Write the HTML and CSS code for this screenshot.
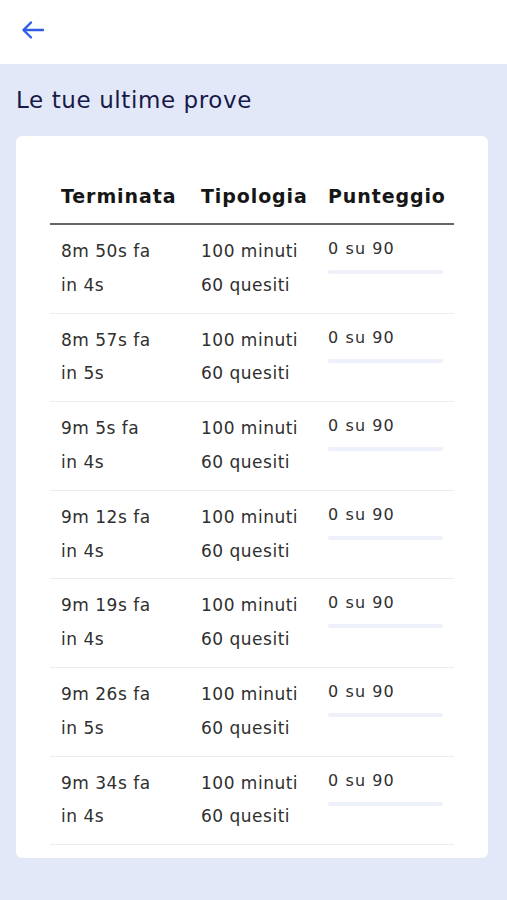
FILE: index.html
```html
<!DOCTYPE html>
<html lang="it">
<head>
<meta charset="utf-8">
<title>Le tue ultime prove</title>
<link rel="stylesheet" href="styles.css">
</head>
<body>
<header class="topbar">
  <button class="back" aria-label="Indietro">
    <svg width="24" height="20" viewBox="0 0 24 20" fill="none" stroke="#2f5be6" stroke-width="2.4" stroke-linecap="round" stroke-linejoin="round">
      <path d="M22 10H3"/>
      <path d="M10 2.5L2.5 10L10 17.5"/>
    </svg>
  </button>
</header>
<main class="content">
  <h1 class="title">Le tue ultime prove</h1>
  <section class="card">
    <table class="tests">
      <thead>
        <tr><th class="c1">Terminata</th><th class="c2">Tipologia</th><th class="c3">Punteggio</th></tr>
      </thead>
      <tbody>
        <tr><td><div>8m 50s fa</div><div>in 4s</div></td><td><div>100 minuti</div><div>60 quesiti</div></td><td class="score"><div class="pts">0 su 90</div><div class="bar"></div></td></tr>
        <tr><td><div>8m 57s fa</div><div>in 5s</div></td><td><div>100 minuti</div><div>60 quesiti</div></td><td class="score"><div class="pts">0 su 90</div><div class="bar"></div></td></tr>
        <tr><td><div>9m 5s fa</div><div>in 4s</div></td><td><div>100 minuti</div><div>60 quesiti</div></td><td class="score"><div class="pts">0 su 90</div><div class="bar"></div></td></tr>
        <tr><td><div>9m 12s fa</div><div>in 4s</div></td><td><div>100 minuti</div><div>60 quesiti</div></td><td class="score"><div class="pts">0 su 90</div><div class="bar"></div></td></tr>
        <tr><td><div>9m 19s fa</div><div>in 4s</div></td><td><div>100 minuti</div><div>60 quesiti</div></td><td class="score"><div class="pts">0 su 90</div><div class="bar"></div></td></tr>
        <tr><td><div>9m 26s fa</div><div>in 5s</div></td><td><div>100 minuti</div><div>60 quesiti</div></td><td class="score"><div class="pts">0 su 90</div><div class="bar"></div></td></tr>
        <tr><td><div>9m 34s fa</div><div>in 4s</div></td><td><div>100 minuti</div><div>60 quesiti</div></td><td class="score"><div class="pts">0 su 90</div><div class="bar"></div></td></tr>
      </tbody>
    </table>
  </section>
</main>
</body>
</html>
```

FILE: styles.css
```css
* { box-sizing: border-box; }
html, body { margin: 0; padding: 0; }
body {
  font-family: "DejaVu Sans", "Inter", "Liberation Sans", sans-serif;
  background: #e3e8f9;
  color: #2b2b2b;
  min-height: 900px;
}
.topbar {
  height: 64px;
  background: #ffffff;
  display: flex;
  align-items: center;
  padding-left: 20px;
}
.back {
  border: 0;
  background: none;
  padding: 0;
  width: 26px;
  height: 22px;
  display: flex;
  align-items: center;
  justify-content: center;
  margin-top: -4px;
}
.content {
  padding: 20px 19px 0 16px;
}
.title {
  margin: 0 0 20px 0;
  font-size: 23px;
  font-weight: 400;
  line-height: 32px;
  letter-spacing: 0.6px;
  color: #171a48;
}
.card {
  background: #ffffff;
  border-radius: 6px;
  padding: 33px 34px 13px 34px;
}
.tests {
  width: 100%;
  border-collapse: collapse;
  table-layout: fixed;
}
.tests th {
  text-align: left;
  font-weight: 700;
  font-size: 19px;
  letter-spacing: 0.9px;
  color: #161616;
  height: 55px;
  padding: 0 0 0 11px;
  border-bottom: 2px solid #666666;
  vertical-align: middle;
  white-space: nowrap;
}
.tests .c1 { width: 140px; }
.tests .c2 { width: 127px; }
.tests td {
  vertical-align: top;
  padding: 10px 0 10px 11px;
  font-size: 17px;
  letter-spacing: 0.5px;
  line-height: 33.8px;
  color: #2f2f2f;
  border-bottom: 1px solid #ececef;
  white-space: nowrap;
}
.tests td.score {
  padding-top: 10px;
  font-size: 16px;
  letter-spacing: 1.1px;
}
.pts {
  line-height: 28px;
}
.bar {
  margin-top: 7px;
  width: 115px;
  height: 4px;
  border-radius: 2px;
  background: #eef0fa;
}
```
